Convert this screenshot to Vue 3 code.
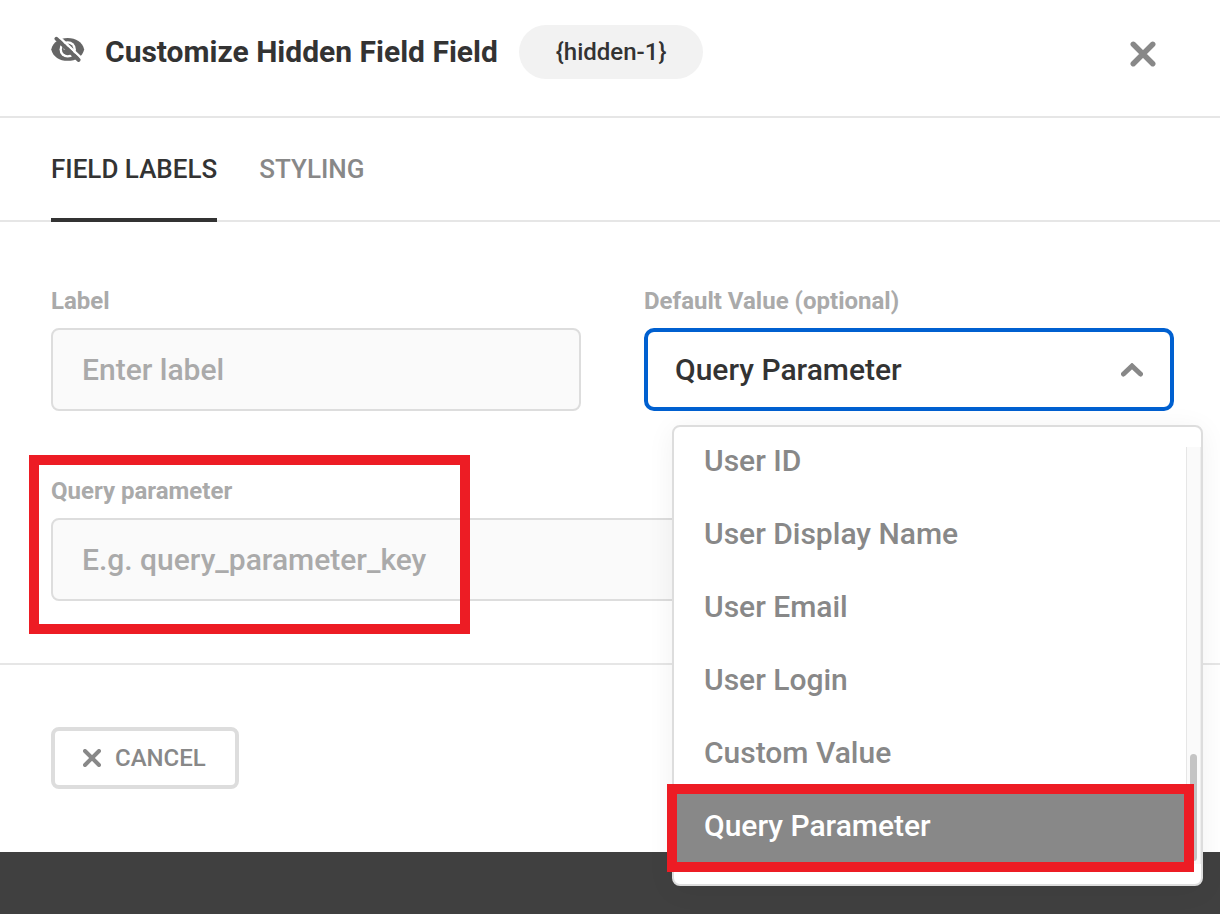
<script setup>
import { ref } from 'vue'

const label = ref('')
const queryKey = ref('')
const selected = ref('Query Parameter')
const options = ['User ID', 'User Display Name', 'User Email', 'User Login', 'Custom Value', 'Query Parameter']
</script>

<template>
  <div class="page">
    <main class="dialog" role="dialog" aria-labelledby="dialog-title">
      <header class="header">
        <svg class="eye" viewBox="0 0 34 28" aria-hidden="true">
          <path d="M0.200 13.400C2 6 8.500 2 16.700 2S31.400 6 33.200 13.400C31.400 20.800 24.900 24.800 16.700 24.800S2 20.800 0.200 13.400Z" fill="#666" />
          <circle cx="16.700" cy="13.400" r="8.200" fill="#fff" />
          <circle cx="16.700" cy="13.400" r="5.800" fill="#666" />
          <path d="M12.500 13.400a4.200 4.200 0 0 1 4.200-4.200v4.200z" fill="#fff" />
          <path d="M7.500 0.300L31 22.600" stroke="#fff" stroke-width="2.400" />
          <path d="M5.300 2.700L27.700 24" stroke="#666" stroke-width="3.800" stroke-linecap="round" />
        </svg>
        <h1 id="dialog-title" class="title">Customize Hidden Field Field</h1>
        <span class="tag">{hidden-1}</span>
        <button class="close" type="button" aria-label="Close">
          <svg viewBox="0 0 24 24" aria-hidden="true"><path d="M3 3L21 21M21 3L3 21" /></svg>
        </button>
      </header>

      <nav class="tabs" role="tablist">
        <button class="tab active" type="button" role="tab" aria-selected="true">FIELD LABELS</button>
        <button class="tab" type="button" role="tab" aria-selected="false">STYLING</button>
      </nav>

      <form id="field-form" class="body" @submit.prevent>
        <div class="field">
          <label for="label">Label</label>
          <input id="label" v-model="label" class="control" type="text" placeholder="Enter label" />
        </div>

        <div class="field">
          <label for="default-value">Default Value (optional)</label>
          <div class="picker">
            <select id="default-value" v-model="selected" class="control select">
              <option v-for="option in options" :key="option">{{ option }}</option>
            </select>
            <svg class="chevron" viewBox="0 0 22 14" aria-hidden="true"><path d="M2.500 11L11 3L19.500 11" /></svg>
            <div class="menu">
              <ul class="list" role="listbox" aria-label="Default value options">
                <li
                  v-for="option in options"
                  :key="option"
                  class="option"
                  :class="{ current: option === selected }"
                  role="option"
                  :aria-selected="option === selected"
                  @click="selected = option"
                >{{ option }}</li>
              </ul>
              <div class="track"><div class="thumb"></div></div>
              <div class="mark mark-option"></div>
            </div>
          </div>
        </div>

        <div class="field wide">
          <label for="query-key">Query parameter</label>
          <input id="query-key" v-model="queryKey" class="control" type="text" placeholder="E.g. query_parameter_key" />
          <div class="mark mark-field"></div>
        </div>
      </form>

      <footer class="footer">
        <button class="cancel" type="button">
          <svg viewBox="0 0 18 18" aria-hidden="true"><path d="M2 2L16 16M16 2L2 16" /></svg>
          CANCEL
        </button>
      </footer>
    </main>
  </div>
</template>

<style>
body {
  margin: 0;
  background: #404040;
}
</style>

<style scoped>
.page {
  min-height: 100vh;
  overflow: hidden;
  background: #404040;
  font-family: Roboto, "Liberation Sans", sans-serif;
  font-weight: 500;
  color: #333;
}
.page *,
.page {
  box-sizing: border-box;
}
button,
input,
select {
  margin: 0;
  font-family: inherit;
  font-weight: 500;
}
.dialog {
  background: #fff;
}
.header {
  display: flex;
  align-items: center;
  height: 118px;
  padding: 0 64px 12px 51px;
  border-bottom: 2px solid #e6e6e6;
}
.eye {
  width: 34px;
  height: 28px;
  margin: 0 20px 4px 0;
}
.title {
  margin: 0;
  font-size: 30px;
  line-height: 40px;
  font-weight: 700;
}
.tag {
  margin-left: 21px;
  padding: 0 37px;
  border-radius: 27px;
  background: #f2f2f2;
  font-size: 24px;
  line-height: 54px;
}
.close {
  display: flex;
  margin: 4px 0 0 auto;
  padding: 0;
  border: 0;
  background: none;
}
.close svg {
  width: 26px;
  height: 26px;
  stroke-width: 5;
}
.close svg,
.chevron,
.cancel svg {
  fill: none;
  stroke: #888;
  stroke-linecap: round;
}
.tabs {
  display: flex;
  gap: 42px;
  padding: 0 51px;
  border-bottom: 2px solid #e6e6e6;
}
.tab {
  height: 104px;
  margin-bottom: -2px;
  padding: 2px 0 0;
  border: 0;
  border-bottom: 4px solid transparent;
  background: none;
  color: #888;
  font-size: 26px;
}
.tab.active {
  border-bottom-color: #333;
  color: #333;
}
.body {
  display: grid;
  grid-template-columns: 1fr 1fr;
  gap: 66px 63px;
  padding: 65px 46px 62px 51px;
}
.field {
  position: relative;
  display: flex;
  flex-direction: column;
  gap: 12px;
}
.wide {
  grid-column: 1 / -1;
}
label {
  color: #aaa;
  font-size: 24px;
  line-height: 29px;
  font-weight: 700;
}
.control {
  display: block;
  width: 100%;
  height: 83px;
  padding: 0 29px;
  border: 2px solid #ddd;
  border-radius: 8px;
  outline: 0;
  background: #fafafa;
  color: #333;
  font-size: 30px;
}
.control::placeholder {
  color: #aaa;
  opacity: 1;
}
.picker {
  position: relative;
}
.select {
  appearance: none;
  padding: 0 27px;
  border: 4px solid #0060d0;
  border-radius: 10px;
  background: #fff;
}
.chevron {
  position: absolute;
  top: 35px;
  right: 31px;
  width: 22px;
  height: 14px;
  stroke-width: 5;
  pointer-events: none;
}
.menu {
  position: absolute;
  z-index: 2;
  top: calc(100% + 14px);
  left: 28px;
  right: -29px;
  padding: 20px 0;
  border: 2px solid #ddd;
  border-radius: 8px;
  background: #fff;
  box-shadow: 0 4px 28px rgba(0, 0, 0, 0.06);
}
.list {
  display: flex;
  flex-direction: column;
  justify-content: flex-end;
  height: 417px;
  margin: 0 15px 0 0;
  padding: 0;
  list-style: none;
}
.option {
  flex: none;
  padding: 0 30px 4px;
  color: #888;
  font-size: 30px;
  line-height: 69px;
}
.option.current {
  background: #888;
  color: #fff;
}
.track {
  position: absolute;
  top: 20px;
  bottom: 20px;
  right: 0;
  display: flex;
  flex-direction: column;
  justify-content: flex-end;
  width: 15px;
  padding: 0 3px 3px;
  border-left: 1px solid #e6e6e6;
  border-right: 1px solid #eee;
  background: #fafafa;
}
.thumb {
  height: 107px;
  border-radius: 4px;
  background: #c4c4c4;
}
.mark {
  position: absolute;
  border: 10px solid #ed1c24;
  pointer-events: none;
}
.mark-option {
  left: -7px;
  right: 7px;
  bottom: 12px;
  height: 88px;
}
.mark-field {
  top: -22px;
  bottom: -33px;
  left: -22px;
  width: 441px;
}
.footer {
  padding: 62px 51px 63px;
  border-top: 2px solid #e6e6e6;
}
.cancel {
  display: flex;
  align-items: center;
  gap: 14px;
  height: 62px;
  padding: 0 29px 0 28px;
  border: 4px solid #ddd;
  border-radius: 8px;
  background: #fff;
  color: #888;
  font-size: 24px;
}
.cancel svg {
  width: 18px;
  height: 18px;
  stroke-width: 4;
}
</style>
